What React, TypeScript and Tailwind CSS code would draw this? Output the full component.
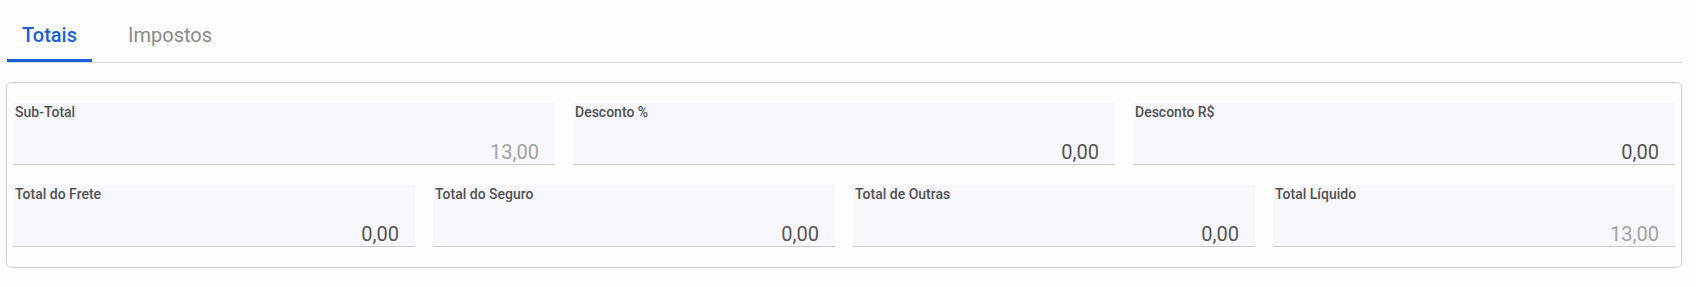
import React from "react";

type FieldProps = { label: string; value: string; disabled?: boolean };

function Field({ label, value, disabled }: FieldProps) {
  return (
    <div className="flex h-[62px] flex-col justify-between border-b border-[#c9c9cf] bg-[#f7f7fd]">
      <div className="pl-[2px] text-[14px] font-medium leading-[18px] text-[#525252]">{label}</div>
      <div
        className={
          "pr-[16px] text-right text-[20px] leading-[24px] " +
          (disabled ? "text-[#a3a3a3]" : "text-[#555555]")
        }
      >
        {value}
      </div>
    </div>
  );
}

export default function App() {
  return (
    <div
      className="min-h-[287px] w-full bg-[#fdfdfd] pl-[6px] pr-[14px]"
      style={{ fontFamily: "Roboto, 'Liberation Sans', sans-serif" }}
    >
      <div className="flex border-b border-[#d9d9d9] pl-px">
        <div className="border-b-[3px] border-[#1b5fd6] px-[15px] pt-[21px] pb-[10px] text-[20px] font-medium leading-[28px] text-[#1b5fd6]">
          Totais
        </div>
        <div className="ml-[21px] border-b-[3px] border-transparent px-[15px] pt-[21px] pb-[10px] text-[20px] font-normal leading-[28px] text-[#8a8a8a]">
          Impostos
        </div>
      </div>
      <div className="mt-[19px] rounded-[5px] border border-[#d2d2d2] px-[6px] pt-[20px] pb-[20px]">
        <div className="grid grid-cols-3 gap-[18px]">
          <Field label="Sub-Total" value="13,00" disabled />
          <Field label="Desconto %" value="0,00" />
          <Field label="Desconto R$" value="0,00" />
        </div>
        <div className="mt-[20px] grid grid-cols-4 gap-[18px]">
          <Field label="Total do Frete" value="0,00" />
          <Field label="Total do Seguro" value="0,00" />
          <Field label="Total de Outras" value="0,00" />
          <Field label="Total Líquido" value="13,00" disabled />
        </div>
      </div>
    </div>
  );
}
